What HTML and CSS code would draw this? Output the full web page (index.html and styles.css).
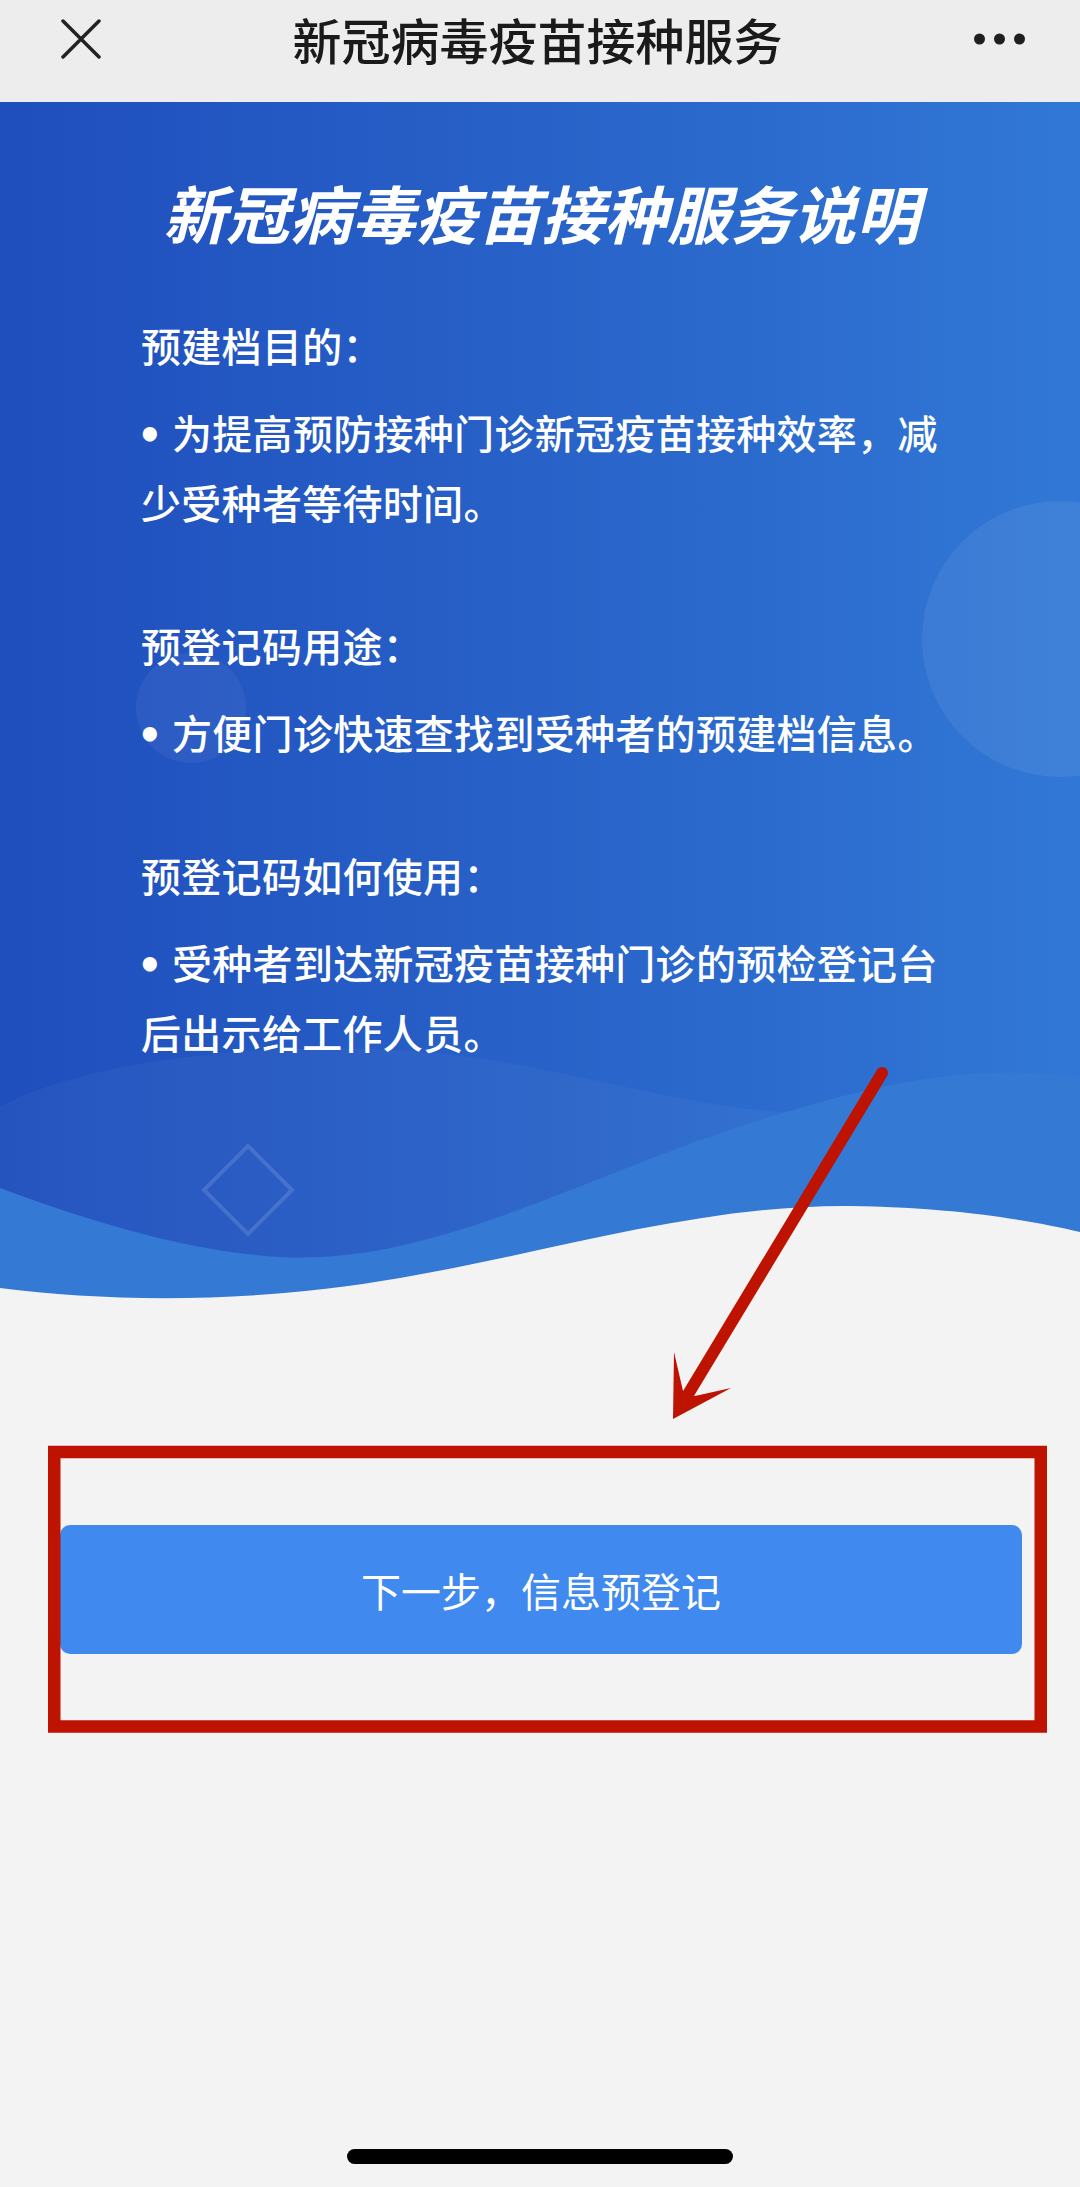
FILE: index.html
```html
<!DOCTYPE html>
<html lang="zh-CN">
<head>
<meta charset="UTF-8">
<title>新冠病毒疫苗接种服务</title>
<link rel="stylesheet" href="styles.css">
</head>
<body>
<div class="page">

  <header class="navbar">
    <svg class="nav-close" viewBox="0 0 40 40"><path d="M2 2L38 38M38 2L2 38"/></svg>
    <h1 class="nav-title">新冠病毒疫苗接种服务</h1>
    <svg class="nav-more" viewBox="0 0 51 12">
      <circle cx="5.5" cy="6" r="5.5"/><circle cx="25.5" cy="6" r="5.5"/><circle cx="45.5" cy="6" r="5.5"/>
    </svg>
  </header>

  <section class="hero">
    <!-- bubbles, diamond and the waves at the bottom of the banner -->
    <svg class="hero-bg" viewBox="0 0 1080 1198">
      <circle cx="1060" cy="537" r="138" class="bubble"/>
      <circle cx="191" cy="606" r="55" class="bubble small"/>
      <g transform="translate(0 938)">
        <path class="wave-faint" d="M0 67C80 22 250 2 400 10C550 20 650 62 780 72C900 80 980 50 1080 40V260H0Z"/>
        <path class="wave-light" d="M0 148C100 185 220 222 320 217C460 210 600 130 760 80C880 42 980 22 1080 38V260H0Z"/>
        <path class="wave-ground" d="M0 248C110 262 250 264 400 238C560 210 700 165 850 166C950 167 1030 180 1080 192V260H0Z"/>
      </g>
      <path class="diamond" d="M248 1044L292 1088L248 1132L204 1088Z"/>
    </svg>

    <h2 class="hero-title">新冠病毒疫苗接种服务说明</h2>

    <div class="notes">
      <div class="note">
        <h3>预建档目的：</h3>
        <p><span class="dot">•</span>为提高预防接种门诊新冠疫苗接种效率，减少受种者等待时间。</p>
      </div>
      <div class="note">
        <h3>预登记码用途：</h3>
        <p><span class="dot">•</span>方便门诊快速查找到受种者的预建档信息。</p>
      </div>
      <div class="note">
        <h3>预登记码如何使用：</h3>
        <p><span class="dot">•</span>受种者到达新冠疫苗接种门诊的预检登记台后出示给工作人员。</p>
      </div>
    </div>
  </section>

  <div class="actions">
    <button class="btn-next" type="button">下一步，信息预登记</button>
  </div>

  <div class="home-bar"></div>

  <!-- red marker: arrow pointing at the button and a frame round it -->
  <svg class="callout" viewBox="0 0 1080 720">
    <line x1="882" y1="33" x2="687" y2="356" class="arrow-shaft"/>
    <path class="arrow-head" d="M673 379L674 312L683 351L695 356L731 348Z"/>
    <rect x="54.25" y="412" width="986.5" height="274.5" class="frame"/>
  </svg>

</div>
</body>
</html>
```

FILE: styles.css
```css
* { box-sizing: border-box; margin: 0; padding: 0 }
body { background: #f3f3f3; color: #1a1a1a;
  font-family: "Noto Sans CJK SC", "Noto Sans", sans-serif }

.page { position: relative; min-height: 2187px; display: flex;
  flex-direction: column; overflow: hidden }

/* top bar */
.navbar { height: 102px; background: #ededed; display: flex;
  align-items: center; justify-content: space-between;
  padding: 0 55px 24px 61px }
.nav-close { width: 40px; height: 40px; fill: none; stroke: #222;
  stroke-width: 3.5; stroke-linecap: round }
.nav-title { font-size: 49px; font-weight: 500; line-height: 60px; color: #1a1a1a }
.nav-more { width: 51px; height: 12px; fill: #1f1f1f }

/* blue banner */
.hero { position: relative; height: 1198px; padding: 65px 135px 0 141px;
  background: linear-gradient(90deg, #1f4ebd 0%, #2862c8 50%, #3178d6 100%);
  color: #fff; overflow: hidden }
.hero-bg { position: absolute; left: 0; top: 0; width: 1080px; height: 1198px }
.bubble { fill: rgba(255, 255, 255, .07) }
.bubble.small { fill: rgba(255, 255, 255, .05) }
.wave-faint { fill: rgba(255, 255, 255, .035) }
.wave-light { fill: #3479d4 }
.wave-ground { fill: #f3f3f3 }
.diamond { fill: none; stroke: rgba(255, 255, 255, .13); stroke-width: 4 }

.hero-title { position: relative; font-size: 63px; font-weight: 700;
  font-style: italic; line-height: 90px; text-align: center; margin-right: 4px }
.notes { position: relative; margin-top: 53px }
.note + .note { margin-top: 73px }
.note h3, .note p { font-size: 40px; font-weight: 500; line-height: 70px;
  letter-spacing: .3px }
.note h3 { margin-bottom: 17px }
.dot { display: inline-block; vertical-align: top; width: 35px; height: 70px;
  margin-left: -4px; position: relative; top: 3px;
  font-family: "DejaVu Sans", sans-serif; font-weight: 700 }

/* next step */
.actions { padding: 225px 58px 0 60px }
.btn-next { display: block; width: 100%; height: 129px; border: none;
  border-radius: 10px; background: #3f89ef; color: #fff;
  font-family: inherit; font-size: 40px; font-weight: 400 }

.home-bar { width: 386px; height: 15px; margin: auto auto 23px;
  border-radius: 8px; background: #000 }

.callout { position: absolute; left: 0; top: 1040px; width: 1080px;
  height: 720px; pointer-events: none }
.arrow-shaft { stroke: #bd1300; stroke-width: 12; stroke-linecap: round }
.arrow-head { fill: #bd1300 }
.frame { fill: none; stroke: #bd1300; stroke-width: 12.5 }
```
